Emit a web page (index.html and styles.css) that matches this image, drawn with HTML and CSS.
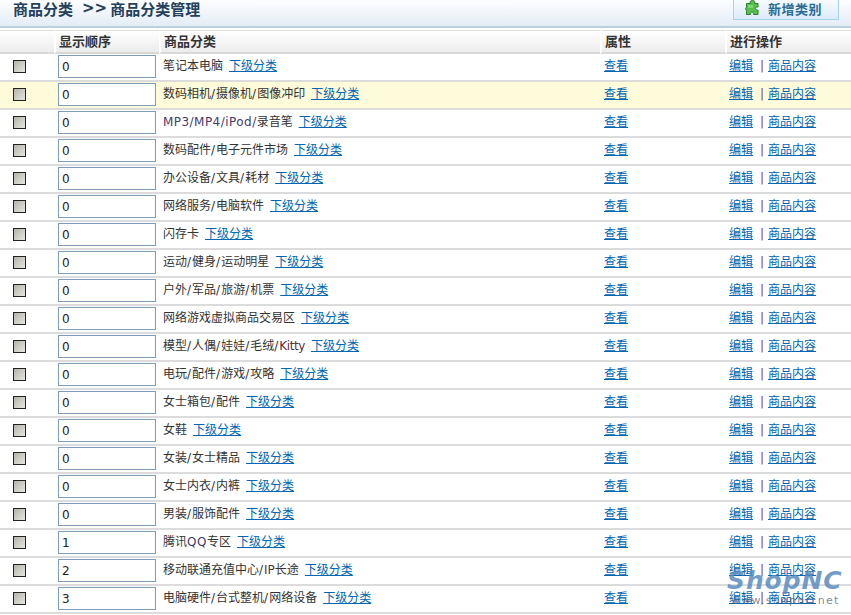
FILE: index.html
```html
<!DOCTYPE html>
<html lang="zh-CN">
<head>
<meta charset="utf-8">
<title>商品分类管理</title>
<link rel="stylesheet" href="styles.css">
</head>
<body>
<div class="page">
  <header class="banner">
    <h1 class="crumb"><span>商品分类</span><span class="arrows">&gt;&gt;</span><span>商品分类管理</span></h1>
    <a class="add-btn" href="#">
      <svg class="puzzle" width="15" height="16" viewBox="0 0 15 16"><path d="M5.500 3.500C4.500 1.500 5.500.5 7.500.5s3 1 2 3H13V7c-1.500-.5-2.500.5-2.500 1.500s1 2 2.500 1.500v4.500H8.500c.5-1.500-.5-2.500-1.500-2.500s-2 1-1.500 2.500h-4v-4C.5 10.500.5 7 1.500 7.500v-4z" fill="#56c04a" stroke="#2c7f2c" stroke-width="1" stroke-linejoin="round"/><path d="M3 5h5v3H3z" fill="#8fe07e" opacity=".7"/></svg>
      新增类别
    </a>
  </header>
  <table class="grid">
    <colgroup><col class="c1"><col class="c2"><col class="c3"><col class="c4"><col class="c5"></colgroup>
    <thead>
      <tr><th></th><th>显示顺序</th><th>商品分类</th><th>属性</th><th>进行操作</th></tr>
    </thead>
    <tbody>
      <tr><td class="chk"><span class="box"></span></td><td class="ord"><input class="order" value="0"></td><td>笔记本电脑<a href="#" class="sub">下级分类</a></td><td><a href="#">查看</a></td><td><a href="#">编辑</a><span class="sep">|</span><a href="#">商品内容</a></td></tr>
      <tr class="hl"><td class="chk"><span class="box"></span></td><td class="ord"><input class="order" value="0"></td><td>数码相机<span class="s">/</span>摄像机<span class="s">/</span>图像冲印<a href="#" class="sub">下级分类</a></td><td><a href="#">查看</a></td><td><a href="#">编辑</a><span class="sep">|</span><a href="#">商品内容</a></td></tr>
      <tr><td class="chk"><span class="box"></span></td><td class="ord"><input class="order" value="0"></td><td><span class="lat">MP3/MP4/iPod/</span>录音笔<a href="#" class="sub">下级分类</a></td><td><a href="#">查看</a></td><td><a href="#">编辑</a><span class="sep">|</span><a href="#">商品内容</a></td></tr>
      <tr><td class="chk"><span class="box"></span></td><td class="ord"><input class="order" value="0"></td><td>数码配件<span class="s">/</span>电子元件市场<a href="#" class="sub">下级分类</a></td><td><a href="#">查看</a></td><td><a href="#">编辑</a><span class="sep">|</span><a href="#">商品内容</a></td></tr>
      <tr><td class="chk"><span class="box"></span></td><td class="ord"><input class="order" value="0"></td><td>办公设备<span class="s">/</span>文具<span class="s">/</span>耗材<a href="#" class="sub">下级分类</a></td><td><a href="#">查看</a></td><td><a href="#">编辑</a><span class="sep">|</span><a href="#">商品内容</a></td></tr>
      <tr><td class="chk"><span class="box"></span></td><td class="ord"><input class="order" value="0"></td><td>网络服务<span class="s">/</span>电脑软件<a href="#" class="sub">下级分类</a></td><td><a href="#">查看</a></td><td><a href="#">编辑</a><span class="sep">|</span><a href="#">商品内容</a></td></tr>
      <tr><td class="chk"><span class="box"></span></td><td class="ord"><input class="order" value="0"></td><td>闪存卡<a href="#" class="sub">下级分类</a></td><td><a href="#">查看</a></td><td><a href="#">编辑</a><span class="sep">|</span><a href="#">商品内容</a></td></tr>
      <tr><td class="chk"><span class="box"></span></td><td class="ord"><input class="order" value="0"></td><td>运动<span class="s">/</span>健身<span class="s">/</span>运动明星<a href="#" class="sub">下级分类</a></td><td><a href="#">查看</a></td><td><a href="#">编辑</a><span class="sep">|</span><a href="#">商品内容</a></td></tr>
      <tr><td class="chk"><span class="box"></span></td><td class="ord"><input class="order" value="0"></td><td>户外<span class="s">/</span>军品<span class="s">/</span>旅游<span class="s">/</span>机票<a href="#" class="sub">下级分类</a></td><td><a href="#">查看</a></td><td><a href="#">编辑</a><span class="sep">|</span><a href="#">商品内容</a></td></tr>
      <tr><td class="chk"><span class="box"></span></td><td class="ord"><input class="order" value="0"></td><td>网络游戏虚拟商品交易区<a href="#" class="sub">下级分类</a></td><td><a href="#">查看</a></td><td><a href="#">编辑</a><span class="sep">|</span><a href="#">商品内容</a></td></tr>
      <tr><td class="chk"><span class="box"></span></td><td class="ord"><input class="order" value="0"></td><td>模型<span class="s">/</span>人偶<span class="s">/</span>娃娃<span class="s">/</span>毛绒<span class="s">/</span><span class="kt">Kitty</span><a href="#" class="sub">下级分类</a></td><td><a href="#">查看</a></td><td><a href="#">编辑</a><span class="sep">|</span><a href="#">商品内容</a></td></tr>
      <tr><td class="chk"><span class="box"></span></td><td class="ord"><input class="order" value="0"></td><td>电玩<span class="s">/</span>配件<span class="s">/</span>游戏<span class="s">/</span>攻略<a href="#" class="sub">下级分类</a></td><td><a href="#">查看</a></td><td><a href="#">编辑</a><span class="sep">|</span><a href="#">商品内容</a></td></tr>
      <tr><td class="chk"><span class="box"></span></td><td class="ord"><input class="order" value="0"></td><td>女士箱包<span class="s">/</span>配件<a href="#" class="sub">下级分类</a></td><td><a href="#">查看</a></td><td><a href="#">编辑</a><span class="sep">|</span><a href="#">商品内容</a></td></tr>
      <tr><td class="chk"><span class="box"></span></td><td class="ord"><input class="order" value="0"></td><td>女鞋<a href="#" class="sub">下级分类</a></td><td><a href="#">查看</a></td><td><a href="#">编辑</a><span class="sep">|</span><a href="#">商品内容</a></td></tr>
      <tr><td class="chk"><span class="box"></span></td><td class="ord"><input class="order" value="0"></td><td>女装<span class="s">/</span>女士精品<a href="#" class="sub">下级分类</a></td><td><a href="#">查看</a></td><td><a href="#">编辑</a><span class="sep">|</span><a href="#">商品内容</a></td></tr>
      <tr><td class="chk"><span class="box"></span></td><td class="ord"><input class="order" value="0"></td><td>女士内衣<span class="s">/</span>内裤<a href="#" class="sub">下级分类</a></td><td><a href="#">查看</a></td><td><a href="#">编辑</a><span class="sep">|</span><a href="#">商品内容</a></td></tr>
      <tr><td class="chk"><span class="box"></span></td><td class="ord"><input class="order" value="0"></td><td>男装<span class="s">/</span>服饰配件<a href="#" class="sub">下级分类</a></td><td><a href="#">查看</a></td><td><a href="#">编辑</a><span class="sep">|</span><a href="#">商品内容</a></td></tr>
      <tr><td class="chk"><span class="box"></span></td><td class="ord"><input class="order" value="1"></td><td>腾讯<span class="q">QQ</span>专区<a href="#" class="sub">下级分类</a></td><td><a href="#">查看</a></td><td><a href="#">编辑</a><span class="sep">|</span><a href="#">商品内容</a></td></tr>
      <tr><td class="chk"><span class="box"></span></td><td class="ord"><input class="order" value="2"></td><td>移动联通充值中心<span class="s">/</span><span class="ip">IP</span>长途<a href="#" class="sub">下级分类</a></td><td><a href="#">查看</a></td><td><a href="#">编辑</a><span class="sep">|</span><a href="#">商品内容</a></td></tr>
      <tr><td class="chk"><span class="box"></span></td><td class="ord"><input class="order" value="3"></td><td>电脑硬件<span class="s">/</span>台式整机<span class="s">/</span>网络设备<a href="#" class="sub">下级分类</a></td><td><a href="#">查看</a></td><td><a href="#">编辑</a><span class="sep">|</span><a href="#">商品内容</a></td></tr>
    </tbody>
  </table>
  <div class="watermark"><div class="wm-logo">ShopNC</div><div class="wm-url">www.shopnc.net</div></div>
</div>
</body>
</html>
```
FILE: styles.css
```css
html, body { margin: 0; padding: 0; background: #fff; overflow: hidden; }
body { font: 12px/15px Tahoma, "DejaVu Sans", "Noto Sans CJK SC", sans-serif; color: #333; }
.page { position: relative; width: 851px; height: 615px; overflow: hidden; }
.banner { box-sizing: border-box; height: 28px; display: flex; justify-content: space-between; background: linear-gradient(#fdfeff, #e4ecf6); border-bottom: 2px solid #bccfdb; padding-left: 13px; }
.crumb { margin: 0; font: bold 15px/17px "Noto Sans CJK SC", sans-serif; color: #25405a; display: flex; }
.arrows { font-family: "DejaVu Sans", sans-serif; margin: 0 3px 0 9px; }
.add-btn { box-sizing: border-box; width: 106px; height: 20px; margin-right: 12px; display: flex; align-items: flex-start; gap: 8px; padding-left: 11px; border: 1px solid #a9d2ec; border-top: 0; background: linear-gradient(#f7fbfe, #dcebf8); font: bold 13px/17px "Noto Sans CJK SC", sans-serif; color: #2a6a96; text-decoration: none; letter-spacing: .5px; }
.puzzle { flex: none; }
.grid { border-collapse: separate; border-spacing: 0; table-layout: fixed; width: 851px; margin-top: 2px; }
.c1 { width: 54px; } .c2 { width: 105px; } .c3 { width: 441px; } .c4 { width: 125px; } .c5 { width: 126px; }
th { box-sizing: border-box; height: 24px; padding: 0 0 3px 3px; text-align: left; font: bold 13px/15px "Noto Sans CJK SC", sans-serif; color: #333; background: linear-gradient(#fff, #ececec); border-top: 1px solid #ddd; border-bottom: 2px solid #d8d8d8; border-left: 2px solid #fff; }
th:first-child { border-left: 0; }
td { box-sizing: border-box; height: 28px; padding: 0 0 1px 4px; border-bottom: 2px solid #dcdcdc; white-space: nowrap; vertical-align: middle; }
.hl td { background: #fdfbd9; }
td.chk { padding: 0 0 1px 13px; }
td.ord { padding: 0 0 1px 4px; }
.box { display: block; box-sizing: border-box; width: 13px; height: 13px; border: 1px solid #222; background: linear-gradient(135deg, #b4b4ac, #e6e6e0); }
.order { display: block; box-sizing: border-box; width: 98px; height: 23px; padding: 0 3px; border: 1px solid #7f9db9; background: #fff; font: 12px Tahoma, "DejaVu Sans", sans-serif; color: #222; }
a { color: #0066b3; text-decoration: underline; }
.sub { margin-left: 6px; }
.s { letter-spacing: 1px; }
.lat { letter-spacing: .46px; color: #4a3a6a; }
.kt { letter-spacing: -.4px; color: #5a2f3a; }
.q { letter-spacing: .5px; color: #3a3a6a; }
.ip { color: #5a2f3a; }
.sep { margin: 0 4px 0 7px; color: #8a3a6a; }
.watermark { position: absolute; left: 727px; top: 568px; }
.wm-logo { font: italic bold 25px/26px "DejaVu Sans", sans-serif; letter-spacing: .9px; color: rgba(90, 140, 190, .85); }
.wm-url { font: 11px/12px "DejaVu Sans", sans-serif; color: rgba(80, 100, 130, .75); letter-spacing: 1.3px; margin: 1px 0 0 4px; }
```
